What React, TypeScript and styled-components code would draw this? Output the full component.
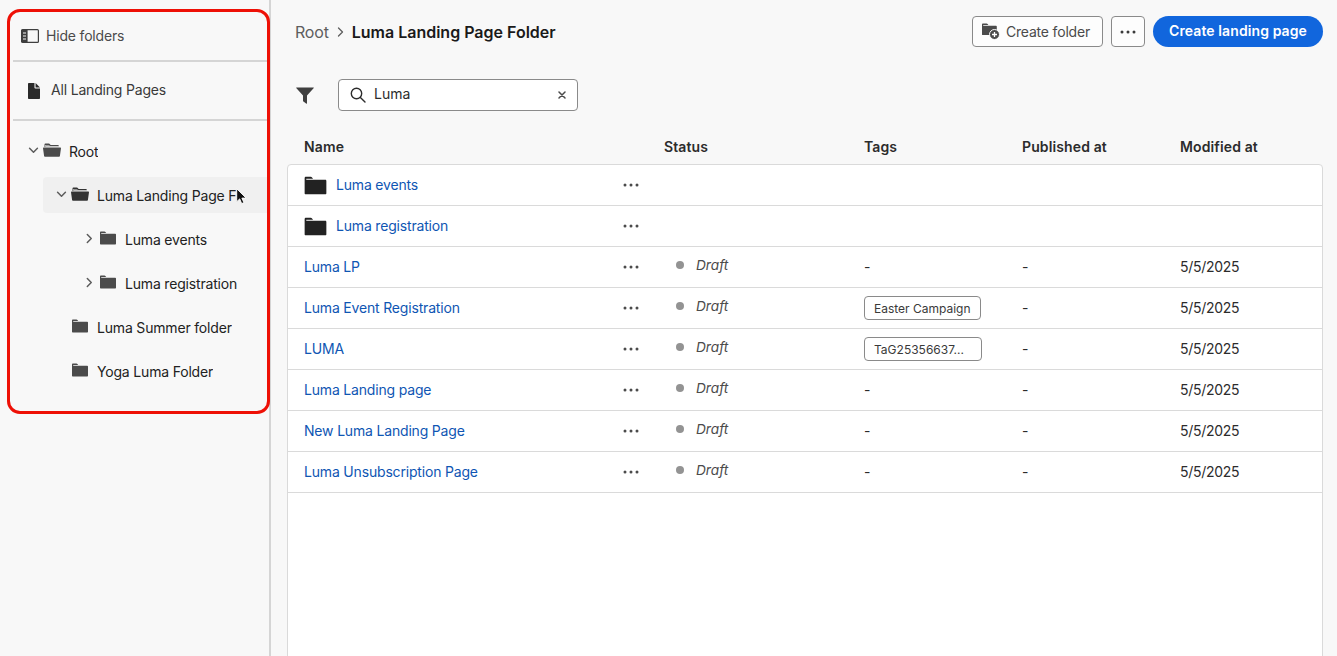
import React from "react";
import styled, { createGlobalStyle } from "styled-components";

const Global = createGlobalStyle`
  html, body { margin: 0; height: 100%; overflow: hidden; background: #f8f8f8; }
  * { box-sizing: border-box; }
  body { font-family: Inter, "Liberation Sans", sans-serif; color: #2c2c2c; }
  #root { height: 100%; }
`;

const Page = styled.div`
  display: flex;
  width: 1337px;
  height: 656px;
  overflow: hidden;
  background: #f8f8f8;
`;
const Sidebar = styled.aside`
  width: 271px;
  flex: none;
  padding: 9px 0 0 7px;
  border-right: 2px solid #d5d5d5;
`;
const Annotated = styled.div`
  width: 263px;
  height: 405px;
  border: 3px solid #ee1006;
  border-radius: 13px;
  padding-left: 3px;
`;
const HideRow = styled.div`
  height: 50px;
  display: flex;
  align-items: center;
  gap: 7px;
  padding: 0 0 0 8px;
  border-bottom: 2px solid #d5d5d5;
  font-size: 14px;
  letter-spacing: -0.18px;
  color: #4b4b4b;
`;
const AllRow = styled.div`
  height: 59px;
  display: flex;
  align-items: center;
  gap: 11px;
  padding: 0 0 0 15px;
  border-bottom: 2px solid #d5d5d5;
  font-size: 14px;
  letter-spacing: -0.18px;
  color: #3a3a3a;
`;
const NavLabel = styled.span`
  margin-top: -2px;
`;
const Tree = styled.div`
  padding-top: 8px;
  display: flex;
  flex-direction: column;
`;
const TreeRow = styled.div<{ $level: number; $hover?: boolean }>`
  position: relative;
  display: flex;
  align-items: center;
  margin-left: ${(p) => (p.$hover ? 30 : 0)}px;
  padding-left: ${(p) => (p.$hover ? 11 : 13 + p.$level * 28)}px;
  background: ${(p) => (p.$hover ? "#f0f0f0" : "transparent")};
  height: ${(p) => (p.$hover ? 36 : 44)}px;
  margin-top: ${(p) => (p.$hover ? 4 : 0)}px;
  margin-bottom: ${(p) => (p.$hover ? 4 : 0)}px;
  border-radius: ${(p) => (p.$hover ? "4px 0 0 4px" : 0)};
  font-size: 14px;
  letter-spacing: -0.18px;
  color: #222;
`;
const Chevron = styled.span`
  width: 14px;
  height: 14px;
  flex: none;
  margin-right: 3px;
  margin-top: -2px;
  display: flex;
  align-items: center;
  justify-content: center;
  color: #5c5c5c;
`;
const ChevronGap = styled.span`
  width: 17px;
  flex: none;
`;
const TreeIcon = styled.span<{ $dark?: boolean }>`
  width: 18px;
  height: 18px;
  flex: none;
  margin-right: 8px;
  margin-top: -3px;
  display: flex;
  align-items: center;
  justify-content: center;
  color: ${(p) => (p.$dark ? "#333" : "#4b4b4b")};
`;
const TreeLabel = styled.span<{ $clip?: boolean }>`
  white-space: nowrap;
  overflow: hidden;
  ${(p) => p.$clip && "width: 139px;"}
`;
const Cursor = styled.svg`
  position: absolute;
  left: 193px;
  top: 11px;
`;
const Main = styled.main`
  flex: 1;
  min-width: 0;
  padding: 16px 14px 0 16px;
  display: flex;
  flex-direction: column;
`;
const Header = styled.header`
  height: 31px;
  display: flex;
  align-items: center;
  justify-content: space-between;
`;
const Crumbs = styled.div`
  display: flex;
  align-items: center;
  padding-left: 8px;
  font-size: 16px;
`;
const CrumbRoot = styled.span`
  color: #5e5e5e;
  letter-spacing: -0.2px;
`;
const CrumbSep = styled.span`
  margin: 0 8px 0 8px;
  display: flex;
  color: #5e5e5e;
`;
const CrumbTitle = styled.span`
  font-weight: 600;
  color: #1a1a1a;
`;
const Actions = styled.div`
  display: flex;
  gap: 8px;
`;
const OutlineButton = styled.button`
  height: 31px;
  background: #fdfdfd;
  border: 1px solid #8a8a8a;
  border-radius: 4px;
  font: 14px Inter, sans-serif;
  letter-spacing: -0.18px;
  color: #4b4b4b;
  display: flex;
  align-items: center;
  justify-content: center;
  padding: 0;
`;
const CreateFolderButton = styled(OutlineButton)`
  width: 131px;
  gap: 6px;
  padding-right: 3px;
`;
const MoreButton = styled(OutlineButton)`
  width: 34px;
  color: #3a3a3a;
`;
const PrimaryButton = styled.button`
  width: 170px;
  height: 31px;
  border: none;
  border-radius: 16px;
  background: #1166dd;
  color: #fff;
  font: 600 14px Inter, sans-serif;
  letter-spacing: 0.1px;
  padding: 0 0 2px;
`;
const FilterBar = styled.div`
  margin-top: 32px;
  display: flex;
  align-items: center;
  height: 32px;
  padding-left: 9px;
  gap: 24px;
`;
const FilterIcon = styled.svg`
  flex: none;
`;
const Search = styled.div`
  width: 240px;
  height: 32px;
  border: 1px solid #8a8a8a;
  border-radius: 4px;
  background: #fff;
  display: flex;
  align-items: center;
  padding: 0 11px 0 11px;
  font-size: 14px;
  color: #2c2c2c;
`;
const SearchText = styled.span`
  flex: 1;
  margin-left: 8px;
  margin-top: -3px;
`;
const Columns = "360px 200px 158px 158px 1fr";
const HeadRow = styled.div`
  margin-top: 27px;
  height: 30px;
  padding: 0 0 9px 17px;
  display: grid;
  grid-template-columns: ${Columns};
  align-items: center;
  font-size: 14px;
  font-weight: 600;
  letter-spacing: 0.12px;
  color: #2c2c2c;
`;
const Card = styled.div`
  flex: 1;
  min-height: 620px;
  background: #fff;
  border: 1px solid #dadada;
  border-radius: 4px 4px 0 0;
`;
const Row = styled.div`
  height: 41px;
  padding-left: 16px;
  display: grid;
  grid-template-columns: ${Columns};
  align-items: center;
  border-bottom: 1px solid #dadada;
  font-size: 14px;
  color: #2c2c2c;
`;
const NameCell = styled.div`
  display: flex;
  align-items: center;
  justify-content: space-between;
  padding-right: 25px;
  letter-spacing: -0.18px;
`;
const NameLink = styled.a`
  display: flex;
  align-items: center;
  gap: 9px;
  color: #0f56b3;
`;
const NameText = styled.span`
  margin-top: -2px;
`;
const RowDots = styled.span`
  display: flex;
  color: #4b4b4b;
`;
const Status = styled.div`
  display: flex;
  align-items: center;
  padding-left: 12px;
  margin-top: -4px;
  font-style: italic;
  font-size: 13.7px;
  color: #4b4b4b;
`;
const Dot = styled.span`
  width: 8px;
  height: 8px;
  border-radius: 50%;
  background: #939393;
  margin-right: 12px;
`;
const Tag = styled.span<{ $w: number }>`
  display: inline-flex;
  align-items: center;
  width: ${(p) => p.$w}px;
  height: 24px;
  padding-left: 9px;
  border: 1px solid #8a8a8a;
  border-radius: 4px;
  font-size: 12px;
  color: #3a3a3a;
`;
const PlainCell = styled.div`
  margin-top: -2px;
`;
const TagCell = styled.div`
  display: flex;
`;
const DateCell = styled(PlainCell)`
  letter-spacing: -0.3px;
`;
const RowFolder = styled.span`
  color: #222;
  display: flex;
`;

const Dots = () => (
  <svg width="16" height="4" viewBox="0 0 16 4" fill="currentColor">
    <circle cx="2" cy="2" r="1.5" />
    <circle cx="8" cy="2" r="1.5" />
    <circle cx="14" cy="2" r="1.5" />
  </svg>
);
const Closed = ({ size = 16, h = 14 }: { size?: number; h?: number }) => (
  <svg width={size} height={h} viewBox="0 0 16 14" fill="currentColor">
    <path d="M0 1.6C0 1 .4.6 1 .6h3.4c.5 0 .9.2 1.2.6l.6.9H1.2v.7h14c.5 0 .8.3.8.8v9.2c0 .4-.3.7-.7.7H.7c-.4 0-.7-.3-.7-.7z" />
  </svg>
);
const Open = () => (
  <svg width="18" height="14" viewBox="0 0 18 14" fill="currentColor">
    <path d="M1.5 1.5C1.5 1 1.9.6 2.4.6h3.4c.5 0 .9.2 1.2.6l.6.7H15c.5 0 .8.3.8.8v.6H3v-.8h3.8l-.5-.6H2.4v2.2h-.9z" />
    <path d="M.6 4.6h16.8c.4 0 .6.3.6.6l-1.1 7.9c0 .4-.4.7-.8.7H1.9c-.4 0-.8-.3-.8-.7L0 5.2c0-.3.2-.6.6-.6z" />
  </svg>
);
const Down = () => (
  <svg width="11" height="7" viewBox="0 0 12 8" fill="none" stroke="currentColor" strokeWidth="1.7" strokeLinecap="round" strokeLinejoin="round">
    <path d="M1.5 1.5 6 6l4.5-4.5" />
  </svg>
);
const Right = () => (
  <svg width="7" height="11" viewBox="0 0 8 12" fill="none" stroke="currentColor" strokeWidth="1.7" strokeLinecap="round" strokeLinejoin="round">
    <path d="M1.5 1.5 6 6l-4.5 4.5" />
  </svg>
);

type TreeItem = { label: string; level: number; kind: "open" | "closed"; arrow?: "down" | "right"; hover?: boolean };
const treeItems: TreeItem[] = [
  { label: "Root", level: 0, kind: "open", arrow: "down" },
  { label: "Luma Landing Page Folder", level: 1, kind: "open", arrow: "down", hover: true },
  { label: "Luma events", level: 2, kind: "closed", arrow: "right" },
  { label: "Luma registration", level: 2, kind: "closed", arrow: "right" },
  { label: "Luma Summer folder", level: 1, kind: "closed" },
  { label: "Yoga Luma Folder", level: 1, kind: "closed" },
];

type RowItem = { name: string; folder?: boolean; tag?: string; tagW?: number; draft?: boolean };
const rows: RowItem[] = [
  { name: "Luma events", folder: true },
  { name: "Luma registration", folder: true },
  { name: "Luma LP", draft: true },
  { name: "Luma Event Registration", draft: true, tag: "Easter Campaign", tagW: 117 },
  { name: "LUMA", draft: true, tag: "TaG25356637...", tagW: 118 },
  { name: "Luma Landing page", draft: true },
  { name: "New Luma Landing Page", draft: true },
  { name: "Luma Unsubscription Page", draft: true },
];

export default function App() {
  return (
    <Page>
      <Global />
      <Sidebar>
        <Annotated>
          <HideRow>
            <svg width="18" height="14" viewBox="0 0 18 14" fill="none">
              <rect x=".6" y=".6" width="16.8" height="12.8" rx="1" stroke="#3f3f3f" strokeWidth="1.2" />
              <rect x=".6" y=".6" width="6" height="12.8" fill="#3f3f3f" />
              <path d="M2 4h3M2 7h3M2 10h3" stroke="#f8f8f8" strokeWidth="1" />
            </svg>
            <NavLabel>Hide folders</NavLabel>
          </HideRow>
          <AllRow>
            <svg width="12" height="16" viewBox="0 0 13 16" preserveAspectRatio="none" fill="#2a2a2a">
              <path d="M0 .8C0 .4.4 0 .8 0H7v4.6c0 .5.4.9.9.9H13v9.7c0 .4-.4.8-.8.8H.8c-.4 0-.8-.4-.8-.8z" />
              <path d="M8.2 0 13 4.4H8.2z" />
            </svg>
            <NavLabel>All Landing Pages</NavLabel>
          </AllRow>
          <Tree>
            {treeItems.map((t) => (
              <TreeRow key={t.label} $level={t.level} $hover={t.hover}>
                {t.arrow ? (
                  <Chevron>{t.arrow === "down" ? <Down /> : <Right />}</Chevron>
                ) : (
                  <ChevronGap />
                )}
                <TreeIcon $dark={t.hover}>{t.kind === "open" ? <Open /> : <Closed />}</TreeIcon>
                <TreeLabel $clip={t.hover}>{t.label}</TreeLabel>
                {t.hover && (
                  <Cursor width="11" height="17" viewBox="0 0 11 17">
                    <path d="M.7.7v13l3-2.8 2 4.7 2.2-1-2-4.5h4.2z" fill="#111" stroke="#fff" strokeWidth=".9" />
                  </Cursor>
                )}
              </TreeRow>
            ))}
          </Tree>
        </Annotated>
      </Sidebar>
      <Main>
        <Header>
          <Crumbs>
            <CrumbRoot>Root</CrumbRoot>
            <CrumbSep>
              <svg width="7" height="10" viewBox="0 0 7 10" fill="none" stroke="currentColor" strokeWidth="1.3" strokeLinecap="round" strokeLinejoin="round">
                <path d="M1.5 1 5.5 5l-4 4" />
              </svg>
            </CrumbSep>
            <CrumbTitle>Luma Landing Page Folder</CrumbTitle>
          </Crumbs>
          <Actions>
            <CreateFolderButton>
              <svg width="18" height="17" viewBox="0 0 18 17">
                <path d="M0 1.6C0 1 .4.6 1 .6h3.6c.5 0 .9.2 1.2.6l.6.9H1.2v.7H14c.5 0 .8.3.8.8v8.5H.7c-.4 0-.7-.3-.7-.7z" fill="#4b4b4b" />
                <circle cx="12.5" cy="11.5" r="5" fill="#4b4b4b" stroke="#fdfdfd" strokeWidth="1" />
                <path d="M12.5 9v5M10 11.5h5" stroke="#fff" strokeWidth="1.3" />
              </svg>
              Create folder
            </CreateFolderButton>
            <MoreButton aria-label="More">
              <Dots />
            </MoreButton>
            <PrimaryButton>Create landing page</PrimaryButton>
          </Actions>
        </Header>
        <FilterBar>
          <FilterIcon width="18" height="17" viewBox="0 0 18 17" fill="#3f3f3f">
            <path d="M.5.5h17c.4 0 .5.3.3.6L11 8.6v7.6c0 .5-.5.7-.9.4L7.4 14.5c-.3-.2-.4-.4-.4-.8V8.6L.2 1.1C0 .8.1.5.5.5z" />
          </FilterIcon>
          <Search>
            <svg width="16" height="16" viewBox="0 0 16 16" fill="none" stroke="#2c2c2c" strokeWidth="1.4" strokeLinecap="round">
              <circle cx="6.5" cy="6.5" r="5.2" />
              <path d="m10.4 10.4 4.6 4.6" />
            </svg>
            <SearchText>Luma</SearchText>
            <svg width="8" height="8" viewBox="0 0 8 8" stroke="#4b4b4b" strokeWidth="1.5" strokeLinecap="round">
              <path d="M1 1l6 6M7 1 1 7" />
            </svg>
          </Search>
        </FilterBar>
        <HeadRow>
          <span>Name</span>
          <span>Status</span>
          <span>Tags</span>
          <span>Published at</span>
          <span>Modified at</span>
        </HeadRow>
        <Card>
          {rows.map((r) => (
            <Row key={r.name}>
              <NameCell>
                <NameLink>
                  {r.folder && (
                    <RowFolder>
                      <Closed size={23} h={19} />
                    </RowFolder>
                  )}
                  <NameText>{r.name}</NameText>
                </NameLink>
                <RowDots>
                  <Dots />
                </RowDots>
              </NameCell>
              {r.draft ? (
                <>
                  <Status>
                    <Dot />
                    Draft
                  </Status>
                  {r.tag ? (
                    <TagCell>
                      <Tag $w={r.tagW!}>{r.tag}</Tag>
                    </TagCell>
                  ) : (
                    <PlainCell>-</PlainCell>
                  )}
                  <PlainCell>-</PlainCell>
                  <DateCell>5/5/2025</DateCell>
                </>
              ) : null}
            </Row>
          ))}
        </Card>
      </Main>
    </Page>
  );
}
